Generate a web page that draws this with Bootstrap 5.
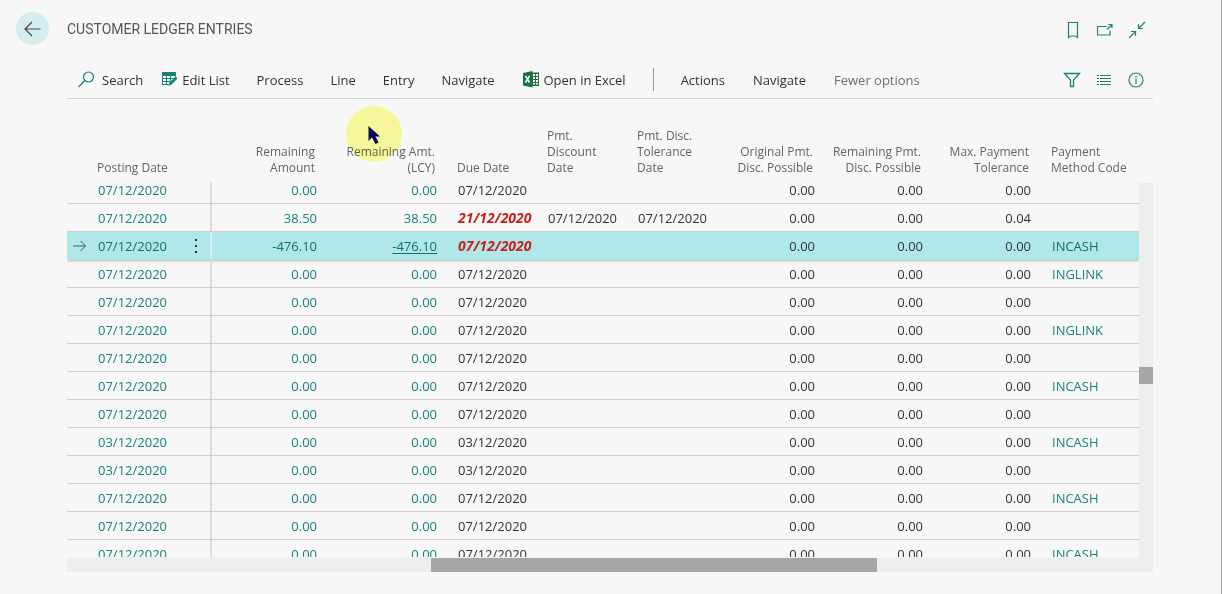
<!DOCTYPE html>
<html lang="en">
<head>
<meta charset="utf-8">
<meta name="viewport" content="width=device-width, initial-scale=1">
<title>Customer Ledger Entries</title>
<link href="https://cdn.jsdelivr.net/npm/bootstrap@5.3.0/dist/css/bootstrap.min.css" rel="stylesheet">
<style>
  :root { --teal: #17837b; --ink: #333; --muted-ink: #5f666d; --line: #cfd1d1; --track: #eceded; --thumb: #a6a6a6; }
  body { font-family: "Open Sans", "Noto Sans", sans-serif; font-size: 13px; line-height: 20px; color: var(--ink); background: #f7f7f7; }
  svg { display: block; fill: none; stroke: currentColor; }
  .page { border-right: 1px solid #9c9c9c; padding: 0 68px 22px 16px; }
  .page-head { height: 57px; }
  .back-btn { width: 33px; height: 33px; background: #d5eeed; color: #3d4a4d; }
  .page-title { font: 400 14px/20px Roboto, sans-serif; color: #50585d; margin-left: 18px; }
  .head-icons { padding-top: 3px; }
  .content { margin-left: 51px; }
  .toolbar { height: 42px; padding: 4px 5px 0 11px; border-bottom: 1px solid var(--line); }
  .tools { gap: 27px; }
  .tools .btn { font-size: 13px; line-height: 20px; color: var(--ink); white-space: nowrap; }
  .tools .search-btn { gap: 7px; }
  .tools .edit-btn { margin-left: -8px; }
  .tools .excel-btn { margin-left: 2px; }
  .tools .quiet-btn { color: #6a6f73; }
  .extra-tools { gap: 28px; }
  .tool-sep { width: 1px; height: 23px; background: #999; }
  .icon-btn { width: 24px; height: 24px; color: var(--teal); }
  .grid-pane { padding-top: 29px; }
  .ledger { table-layout: fixed; border-collapse: separate; border-spacing: 0; }
  .ledger th { font-size: 12px; line-height: 16px; font-weight: 400; color: var(--muted-ink); vertical-align: bottom; padding: 0 0 0 10px; }
  .ledger th.amount { padding: 0 12px 0 0; }
  .ledger td { height: 28px; padding: 0 0 0 11px; border-bottom: 1px solid var(--line); white-space: nowrap; }
  .ledger td.amount { padding: 0 10px 0 0; }
  .ledger .amount { text-align: right; }
  .ledger a { color: var(--teal); text-decoration: none; }
  .ledger td.row-mark { padding: 0 0 0 5px; color: #44605f; }
  .ledger td.row-menu { padding: 0 0 0 1px; background: linear-gradient(#dedede, #dedede) right bottom / 2px 100% no-repeat; }
  .ledger tbody tr:first-child td.row-menu { background-size: 2px 21px; }
  .ledger .overdue { color: #c9201f; font: italic 700 14px/20px "Open Sans", sans-serif; }
  .ledger tr.selected { box-shadow: 0 1px 2px #b9b9c4; }
  .ledger tr.selected td { background-color: #b0e7e9; border-bottom-color: #b0e7e9; }
  .ledger tr.selected td.row-menu { background-image: linear-gradient(#d8eeee, #d8eeee); }
  .ledger tr.selected a { color: #11706a; }
  .ledger tr.selected a.focused { text-decoration: underline; text-underline-offset: 2px; }
  .menu-btn { width: 16px; height: 20px; }
  .v-track { width: 14px; margin-top: 84px; background: var(--track); }
  .h-track { height: 15px; border-top: 1px solid #f2f2f2; background: var(--track); }
  .v-thumb { height: 17px; margin-top: 184px; background: var(--thumb); }
  .h-thumb { background: var(--thumb); }
  .click-halo { position: absolute; left: 19px; bottom: 14px; width: 56px; height: 56px; border-radius: 50%; background: #fffe9f; mix-blend-mode: multiply; }
  .click-halo svg { position: absolute; left: 22px; top: 19px; }
</style>
</head>
<body>
<div class="page d-flex flex-column vh-100 overflow-hidden">
  <header class="page-head d-flex align-items-center flex-shrink-0">
    <button type="button" class="back-btn btn p-0 border-0 rounded-circle d-flex align-items-center justify-content-center" aria-label="Back">
      <svg width="17" height="16" viewBox="0 0 17 16" stroke-width="1.2"><path d="M16.5 8H1M8 1L1 8l7 7"/></svg>
    </button>
    <h1 class="page-title mb-0 text-uppercase">Customer Ledger Entries</h1>
    <div class="head-icons d-flex gap-2 ms-auto me-1">
      <button type="button" class="icon-btn btn p-0 border-0 d-flex align-items-center justify-content-center" aria-label="Bookmark">
        <svg width="16" height="18" viewBox="0 0 16 18" stroke-width="1.2"><path d="M3.500 1.500h9v15L10.500 15h-5l-2 1.500z"/></svg>
      </button>
      <button type="button" class="icon-btn btn p-0 border-0 d-flex align-items-center justify-content-center" aria-label="Open in new window">
        <svg width="16" height="16" viewBox="0 0 16 16" stroke-width="1.2"><path d="M9.500 4.500h-9v8.500h12.500V8.500M10 7.500l5-5M11.500 2.500H15V6"/></svg>
      </button>
      <button type="button" class="icon-btn btn p-0 border-0 d-flex align-items-center justify-content-center" aria-label="Collapse">
        <svg width="18" height="18" viewBox="0 0 18 18" stroke-width="1.2"><path d="M17 1l-6.500 6.500M10.500 3v4.500H15M1 17l6.500-6.500M3 10.500h4.500V15"/></svg>
      </button>
    </div>
  </header>

  <div class="content d-flex flex-column flex-grow-1 overflow-hidden">
    <nav class="toolbar d-flex align-items-center flex-shrink-0" aria-label="Actions">
      <div class="tools d-flex align-items-center">
        <button type="button" class="search-btn btn p-0 border-0 d-flex align-items-center">
          <svg width="17" height="17" viewBox="0 0 17 17" stroke-width="1.2"><g stroke="#17837b"><circle cx="10.500" cy="6" r="5"/><path d="M7 9.500L.5 16"/></g></svg>Search
        </button>
        <button type="button" class="edit-btn btn p-0 border-0 d-flex align-items-center gap-1">
          <svg width="16" height="15" viewBox="0 0 16 15"><g stroke="none"><path fill="#17837b" d="M0 0h14v6l-5 5-.8 2H0z"/><path fill="#f7f7f7" d="M1 4h3v2H1zM5 4h3v2H5zM9 4h4v2H9zM1 7h3v2H1zM5 7h3v2H5zM9 7h2v2H9zM1 10h3v2H1zM5 10h2v2H5z"/></g><path d="M13.500 4l2.200 2.400-6 6.400-3.500 1.400 1.200-3.600z" fill="#17837b" stroke="#f7f7f7" stroke-width=".4"/></svg>Edit List
        </button>
        <button type="button" class="btn p-0 border-0">Process</button>
        <button type="button" class="btn p-0 border-0">Line</button>
        <button type="button" class="btn p-0 border-0">Entry</button>
        <button type="button" class="btn p-0 border-0">Navigate</button>
        <button type="button" class="excel-btn btn p-0 border-0 d-flex align-items-center gap-1">
          <svg width="16" height="17" viewBox="0 0 16 17"><g stroke="none"><path fill="#1e7145" d="M0 2L9.500 0v16.500L0 14.500zM9 1.500h7V15H9z"/><path fill="#fff" d="M10 3h2v2h-2zM13 3h2v2h-2zM10 6h2v2h-2zM13 6h2v2h-2zM10 9h2v2h-2zM13 9h2v2h-2zM10 12h2v1.500h-2zM13 12h2v1.500h-2z"/></g><path d="M2.500 5l4 6.500M6.500 5l-4 6.500" stroke="#fff" stroke-width="1.500"/></svg>Open in Excel
        </button>
        <span class="tool-sep"></span>
        <div class="extra-tools d-flex">
          <button type="button" class="btn p-0 border-0">Actions</button>
          <button type="button" class="btn p-0 border-0">Navigate</button>
          <button type="button" class="quiet-btn btn p-0 border-0">Fewer options</button>
        </div>
      </div>
      <div class="d-flex gap-2 ms-auto">
        <button type="button" class="icon-btn btn p-0 border-0 d-flex align-items-center justify-content-center" aria-label="Filter">
          <svg width="18" height="16" viewBox="0 0 18 16" stroke-width="1.300"><path d="M1.500 1.500h15L10.500 8v6.500h-3V8z"/></svg>
        </button>
        <button type="button" class="icon-btn btn p-0 border-0 d-flex align-items-center justify-content-center" aria-label="List view">
          <svg width="14" height="12" viewBox="0 0 14 12" stroke-width="1.200"><path d="M0 1.500h2M3 1.500h11M0 4.500h2M3 4.500h11M0 7.500h2M3 7.500h11M0 10.500h2M3 10.500h11"/></svg>
        </button>
        <button type="button" class="icon-btn btn p-0 border-0 d-flex align-items-center justify-content-center" aria-label="Information">
          <svg width="16" height="16" viewBox="0 0 16 16" stroke-width="1.200"><circle cx="8" cy="8" r="7"/><path d="M8 6.500V12M8 4v1.300"/></svg>
        </button>
      </div>
    </nav>

    <div class="d-flex flex-grow-1 overflow-hidden">
      <div class="grid-pane flex-grow-1 overflow-hidden">
        <table class="ledger w-100">
          <colgroup>
            <col style="width:20px"><col style="width:100px"><col style="width:25px"><col style="width:115px"><col style="width:120px">
            <col style="width:90px"><col style="width:90px"><col style="width:90px"><col style="width:108px"><col style="width:108px"><col style="width:108px"><col style="width:98px">
          </colgroup>
          <thead>
            <tr>
              <th></th>
              <th scope="col">Posting Date</th>
              <th></th>
              <th scope="col" class="amount">Remaining<br>Amount</th>
              <th scope="col" class="amount position-relative">Remaining Amt.<br>(LCY)
                <span class="click-halo"><svg width="13" height="20" viewBox="0 0 13 20"><path d="M.5 1v15l3.500-3.500L7.500 19l3-1.500L7.500 11.500H12z" fill="#0a0a5c" stroke="none"/></svg></span>
              </th>
              <th scope="col">Due Date</th>
              <th scope="col">Pmt.<br>Discount<br>Date</th>
              <th scope="col">Pmt. Disc.<br>Tolerance<br>Date</th>
              <th scope="col" class="amount">Original Pmt.<br>Disc. Possible</th>
              <th scope="col" class="amount">Remaining Pmt.<br>Disc. Possible</th>
              <th scope="col" class="amount">Max. Payment<br>Tolerance</th>
              <th scope="col">Payment<br>Method Code</th>
            </tr>
          </thead>
          <tbody id="entries"></tbody>
        </table>
      </div>
      <div class="v-track flex-shrink-0"><div class="v-thumb"></div></div>
    </div>
    <div class="h-track d-flex flex-shrink-0"><div class="h-thumb" style="width:41.1%;margin-left:33.5%"></div></div>
  </div>
</div>

<script>
  const entries = [
    { date: '07/12/2020' },
    { date: '07/12/2020', amount: '38.50', due: '21/12/2020', overdue: true, discount: '07/12/2020', tolerance: '07/12/2020', max: '0.04' },
    { date: '07/12/2020', amount: '-476.10', overdue: true, method: 'INCASH', selected: true },
    { date: '07/12/2020', method: 'INGLINK' },
    { date: '07/12/2020' },
    { date: '07/12/2020', method: 'INGLINK' },
    { date: '07/12/2020' },
    { date: '07/12/2020', method: 'INCASH' },
    { date: '07/12/2020' },
    { date: '03/12/2020', method: 'INCASH' },
    { date: '03/12/2020' },
    { date: '07/12/2020', method: 'INCASH' },
    { date: '07/12/2020' },
    { date: '07/12/2020', method: 'INCASH' }
  ];
  const arrow = '<svg width="15" height="12" viewBox="0 0 15 12"><path d="M1 6h12.500M8.500 1l5 5-5 5"/></svg>';
  const menu = '<button type="button" class="menu-btn btn p-0 border-0 d-flex align-items-center justify-content-center" aria-label="Row menu"><svg width="2" height="14" viewBox="0 0 2 14"><path d="M0 0h2v2H0zM0 6h2v2H0zM0 12h2v2H0z" fill="#333" stroke="none"/></svg></button>';
  document.getElementById('entries').innerHTML = entries.map(e => `
    <tr class="${e.selected ? 'selected' : ''}">
      <td class="row-mark">${e.selected ? arrow : ''}</td>
      <td><a href="#">${e.date}</a></td>
      <td class="row-menu">${e.selected ? menu : ''}</td>
      <td class="amount"><a href="#">${e.amount || '0.00'}</a></td>
      <td class="amount"><a href="#" class="${e.selected ? 'focused' : ''}">${e.amount || '0.00'}</a></td>
      <td class="${e.overdue ? 'overdue' : ''}">${e.due || e.date}</td>
      <td>${e.discount || ''}</td>
      <td>${e.tolerance || ''}</td>
      <td class="amount">0.00</td>
      <td class="amount">0.00</td>
      <td class="amount">${e.max || '0.00'}</td>
      <td>${e.method ? `<a href="#">${e.method}</a>` : ''}</td>
    </tr>`).join('');
</script>
<script src="https://cdn.jsdelivr.net/npm/bootstrap@5.3.0/dist/js/bootstrap.bundle.min.js"></script>
</body>
</html>
